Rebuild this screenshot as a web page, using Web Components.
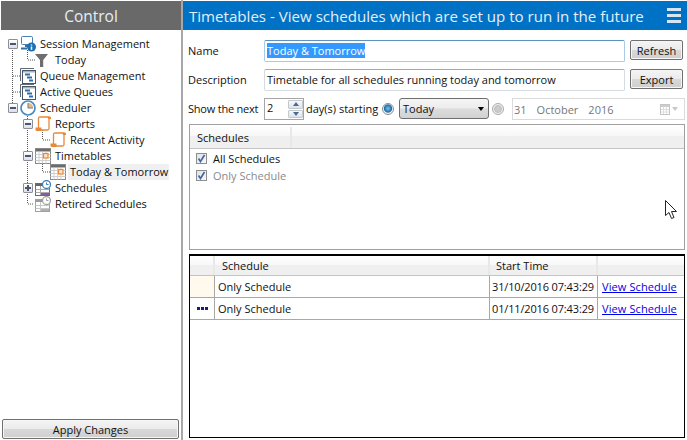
<!DOCTYPE html>
<html>
<head>
<meta charset="utf-8">
<title>Timetables</title>
<style>
  html, body { margin: 0; padding: 0; background: #fff; }
  body { font: 11px "Open Sans", "Noto Sans", sans-serif; color: #111; overflow: hidden; }
</style>
</head>
<body>
<control-app></control-app>

<script>
// icons used by the tree, all 16 wide
const ICONS = {
  session: `<svg width="16" height="16" viewBox="0 0 16 16">
    <rect x="1.500" y="0.500" width="11" height="8" rx="1" fill="#fff" stroke="#4a7fb5"/>
    <path d="M5 10h4M1 12.500h6" stroke="#2f6fa8" stroke-width="2" fill="none"/>
    <circle cx="11.500" cy="11" r="4.500" fill="#1f6fb0"/>
    <path d="M11.500 8.500v1M11.500 10.500v3.200" stroke="#fff" stroke-width="1.500"/></svg>`,
  filter: `<svg width="14" height="16" viewBox="0 0 14 16">
    <path d="M0 2h13L8.200 8v7H5V8z" fill="#6e6e6e"/></svg>`,
  queue: `<svg width="16" height="16" viewBox="0 0 16 16">
    <path d="M0.500 13V0.500H14" fill="none" stroke="#5d6b7a"/>
    <rect x="2.500" y="2.500" width="13" height="13" fill="#fff" stroke="#4b5563"/>
    <rect x="3" y="3" width="12" height="1.500" fill="#9fb3c8"/>
    <path d="M5 6.500h5M7 9.500h5M9 12.500h4" stroke="#2b6ea8" stroke-width="2"/></svg>`,
  clock: `<svg width="16" height="16" viewBox="0 0 16 16">
    <circle cx="8" cy="8" r="7" fill="#fff" stroke="#4a8ac4" stroke-width="1.700"/>
    <path d="M8 2.800V8h5.200A5.200 5.200 0 0 0 8 2.800z" fill="#e0bd85"/>
    <path d="M8 3v5h5" stroke="#777" fill="none"/></svg>`,
  report: `<svg width="16" height="16" viewBox="0 0 16 16">
    <path d="M3.500 12V2.500q0-1.500 1.500-1.500h8q1 0 1 1.500v10q0 1.500-1.500 1.500H6" fill="#fff" stroke="#e8893a" stroke-width="1.300"/>
    <path d="M0.500 11.500h6v3.500H2Q0.500 15 0.500 13.500z" fill="#e8893a"/>
    <path d="M12.500 0.500h2.500q1 0 1 1v1.500h-3z" fill="#e8893a"/></svg>`,
  timetable: `<svg width="16" height="16" viewBox="0 0 16 16">
    <rect x="0.500" y="0.500" width="15" height="15" fill="#fff" stroke="#888"/>
    <rect x="1" y="1" width="14" height="2.500" fill="#6c6c6c"/>
    <path d="M4 3.500v12M7.500 3.500v12M11 3.500v12M0.500 6.500h15M0.500 9.500h15M0.500 12.500h15" stroke="#cfcfcf"/>
    <rect x="8.500" y="5.500" width="4.500" height="4.500" fill="#fbe3c8" stroke="#e8893a" stroke-width="1.200"/></svg>`,
  schedules: `<svg width="16" height="16" viewBox="0 0 16 16">
    <rect x="0.500" y="3.500" width="14" height="12" fill="#fff" stroke="#6b6b6b"/>
    <rect x="1" y="4" width="13" height="2" fill="#666"/>
    <path d="M5.500 6v9M0.500 9.500h14M0.500 12.500h14" stroke="#aaa"/>
    <rect x="6" y="13" width="8" height="2" fill="#8a5aa8"/>
    <circle cx="11.500" cy="4.500" r="4" fill="#fff" stroke="#3f7fb8" stroke-width="1.300"/>
    <path d="M11.500 2.500v2h2" stroke="#3f7fb8" fill="none"/></svg>`,
  retired: `<svg width="16" height="16" viewBox="0 0 16 16">
    <rect x="0.500" y="3.500" width="14" height="12" fill="#fff" stroke="#a0a0a0"/>
    <rect x="1" y="4" width="13" height="2" fill="#9a9a9a"/>
    <path d="M5.500 6v9M0.500 9.500h14M0.500 12.500h14" stroke="#c8c8c8"/>
    <rect x="6" y="13" width="8" height="2" fill="#b0b0b0"/>
    <circle cx="11.500" cy="4.500" r="4" fill="#fff" stroke="#a5a5a5" stroke-width="1.300"/>
    <path d="M11.500 2.500v2h2" stroke="#a5a5a5" fill="none"/></svg>`
};

class PanelTitle extends HTMLElement {
  constructor() {
    super();
    this.attachShadow({ mode: "open" });
    this.shadowRoot.innerHTML = `
      <style>
        :host { display: flex; align-items: center; height: 29px; color: #e6eef6; flex: none; }
        :host([kind="gray"]) { background: #696969; justify-content: center; font-size: 15.500px; }
        :host([kind="blue"]) { background: #0072c6; justify-content: space-between; font-size: 15.100px; padding: 0 6px; }
        .menu { display: flex; flex-direction: column; gap: 3px; }
        .menu i { display: block; width: 14px; height: 3px; background: #d6e6f4; }
      </style>
      <slot></slot>
      ${this.getAttribute("kind") === "blue" ? '<div class="menu"><i></i><i></i><i></i></div>' : ""}
    `;
  }
}

class TreeItem extends HTMLElement {
  constructor() {
    super();
    this.attachShadow({ mode: "open" });
    const level = Number(this.getAttribute("level") || 0);
    const exp = this.getAttribute("exp");
    this.shadowRoot.innerHTML = `
      <style>
        :host { display: flex; align-items: center; height: 16px; white-space: nowrap; }
        .exp { width: 15px; flex: none; }
        .box { box-sizing: border-box; width: 10px; height: 10px; margin-left: 3px;
               border: 1px solid #8a8f98; border-radius: 1px; background: linear-gradient(#fff, #dcdfe4);
               position: relative; z-index: 1; }
        .box i { position: absolute; left: 1px; top: 3px; width: 6px; height: 2px; background: #4a5670; }
        .box b { position: absolute; left: 3px; top: 1px; width: 2px; height: 6px; background: #4a5670; }
        .icon { width: 16px; height: 16px; flex: none; margin-right: 4px; display: flex; position: relative; z-index: 1; }
        .text { padding: 0 1px 0 2px; margin-left: -2px; line-height: 16px; }
        :host([selected]) .text { background: #f0f0f0; }
      </style>
      <div class="exp">${exp ? `<div class="box"><i></i>${exp === "plus" ? "<b></b>" : ""}</div>` : ""}</div>
      <div class="icon">${ICONS[this.getAttribute("icon")] || ""}</div>
      <div class="text"><slot></slot></div>
    `;
    this.style.paddingLeft = (4 + level * 15) + "px";
  }
}

class TreeView extends HTMLElement {
  constructor() {
    super();
    this.attachShadow({ mode: "open" });
    this.shadowRoot.innerHTML = `
      <style>
        :host { display: block; position: relative; flex: 1; padding-top: 6px; }
        svg { position: absolute; left: 0; top: 0; }
        path { stroke: #555; stroke-dasharray: 1 1; fill: none; }
      </style>
      <svg width="180" height="190">
        <path d="M11.500 20V73M12 46h7M12 62h7"/>
        <path d="M26.500 20V30M27 30h7"/>
        <path d="M26.500 84V174M27 174h6"/>
        <path d="M41.500 100V110M42 110h7"/>
        <path d="M41.500 132V142M42 142h7"/>
      </svg>
      <slot></slot>
    `;
  }
}

class PushButton extends HTMLElement {
  constructor() {
    super();
    this.attachShadow({ mode: "open" });
    this.shadowRoot.innerHTML = `
      <style>
        :host { display: flex; align-items: center; justify-content: center; box-sizing: border-box; flex: none;
                width: 53px; height: 20px; border: 1px solid #707070; border-radius: 2px;
                background: linear-gradient(#f4f4f4 0%, #ebebeb 48%, #d8d8d8 52%, #cfcfcf 100%);
                box-shadow: inset 0 0 0 1px #f6f6f6; color: #111; }
      </style>
      <slot></slot>
    `;
  }
}

class TextField extends HTMLElement {
  constructor() {
    super();
    this.attachShadow({ mode: "open" });
    this.shadowRoot.innerHTML = `
      <style>
        :host { display: flex; align-items: center; box-sizing: border-box; flex: 1; height: 22px;
                padding: 0 2px 2px; border: 1px solid #d5dbe3; border-top-color: #a8a8a8; border-radius: 2px; min-width: 0; }
        :host([focused]) { border-color: #a9cbe3; border-top-color: #5b93bd; }
        ::slotted(mark) { background: #3399ff; color: #fff; }
      </style>
      <slot></slot>
    `;
  }
}

class SpinBox extends HTMLElement {
  constructor() {
    super();
    this.attachShadow({ mode: "open" });
    this.shadowRoot.innerHTML = `
      <style>
        :host { display: flex; box-sizing: border-box; width: 40px; height: 22px; flex: none;
                border: 1px solid #a5a5a5; padding-left: 2px; }
        .val { flex: 1; line-height: 17px; }
        .btns { display: flex; flex-direction: column; width: 15px; padding: 1px 0; gap: 1px; }
        .btns div { flex: 1; display: flex; align-items: center; justify-content: center;
                    border: 1px solid #c4c8cf; border-radius: 1px; background: linear-gradient(#f8f8f8, #dfe3e8); }
        .up { width: 0; height: 0; border: 3px solid transparent; border-top: 0; border-bottom: 4px solid #4a6a96; }
        .down { width: 0; height: 0; border: 3px solid transparent; border-bottom: 0; border-top: 4px solid #4a6a96; }
      </style>
      <div class="val"><slot></slot></div>
      <div class="btns"><div><span class="up"></span></div><div><span class="down"></span></div></div>
    `;
  }
}

class ComboBox extends HTMLElement {
  constructor() {
    super();
    this.attachShadow({ mode: "open" });
    this.shadowRoot.innerHTML = `
      <style>
        :host { display: flex; align-items: center; justify-content: space-between; box-sizing: border-box; flex: none;
                width: 90px; height: 21px; padding: 0 4px 0 3px; border: 1px solid #6e6e6e; border-radius: 3px;
                background: linear-gradient(#f5f5f5 0%, #ececec 48%, #dcdcdc 52%, #d2d2d2 100%); align-self: flex-start; font-weight: 500; }
        .arrow { width: 0; height: 0; border: 3.500px solid transparent; border-bottom: 0; border-top: 4px solid #000; }
      </style>
      <span><slot></slot></span><span class="arrow"></span>
    `;
  }
}

class RadioDot extends HTMLElement {
  constructor() {
    super();
    this.attachShadow({ mode: "open" });
    this.shadowRoot.innerHTML = `
      <style>
        :host { display: block; box-sizing: border-box; width: 12px; height: 12px; flex: none; border-radius: 50%;
                border: 1px solid #8d8d8d; background: #eee; }
        :host([on]) { background: radial-gradient(circle at 50% 45%, #7fc0ee 0, #1c6ea8 50%, #eef2f5 62%); }
        :host(:not([on])) { background: radial-gradient(circle, #cfcfcf 0, #c4c4c4 50%, #f0f0f0 62%); border-color: #aaa; }
      </style>
    `;
  }
}

class DatePicker extends HTMLElement {
  constructor() {
    super();
    this.attachShadow({ mode: "open" });
    this.shadowRoot.innerHTML = `
      <style>
        :host { display: flex; align-items: center; box-sizing: border-box; flex: none; width: 173px; height: 22px;
                border: 1px solid #dadada; padding: 0 6px 0 1px; color: #777; }
        .txt { flex: 1; display: flex; gap: 10px; }
        .pick { display: flex; align-items: center; gap: 2px; }
        .arrow { width: 0; height: 0; border: 3.500px solid transparent; border-bottom: 0; border-top: 4px solid #c8c8c8; }
      </style>
      <div class="txt"><slot></slot></div>
      <div class="pick">
        <svg width="10" height="11" viewBox="0 0 10 11">
          <rect x="0.500" y="0.500" width="9" height="10" fill="#fff" stroke="#c4c4c4"/>
          <rect x="1" y="1" width="8" height="2" fill="#cfcfcf"/>
          <path d="M3.500 3v7M6.500 3v7M1 5.500h8M1 8h8" stroke="#dedede"/>
        </svg>
        <span class="arrow"></span>
      </div>
    `;
  }
}

class CheckItem extends HTMLElement {
  constructor() {
    super();
    this.attachShadow({ mode: "open" });
    this.shadowRoot.innerHTML = `
      <style>
        :host { display: flex; align-items: center; height: 17px; gap: 6px; }
        :host([disabled]) { color: #8a8a8a; }
        .box { box-sizing: border-box; width: 11px; height: 11px; border: 1px solid #8e8e8e; flex: none;
               background: linear-gradient(135deg, #dfe3e8, #f8f8f8); display: flex; }
      </style>
      <div class="box">
        <svg width="9" height="9" viewBox="0 0 9 9"><path d="M1.500 4.500L3.500 7.500L7.500 1" fill="none" stroke="#4668a0" stroke-width="1.700"/></svg>
      </div>
      <slot></slot>
    `;
  }
}

// header strip shared by the two lists, cells come in through the slot
class ListHeader extends HTMLElement {
  constructor() {
    super();
    this.attachShadow({ mode: "open" });
    this.shadowRoot.innerHTML = `
      <style>
        :host { display: grid; box-sizing: border-box; flex: none; border-bottom: 1px solid #c4c4c4;
                background: linear-gradient(#fff 0%, #f8f8f8 45%, #efefef 50%, #f0f0f0 100%); }
        ::slotted(*) { display: flex; align-items: center; border-right: 2px solid #e8e8e8; padding-left: 7px; }
      </style>
      <slot></slot>
    `;
  }
}

class ScheduleRow extends HTMLElement {
  constructor() {
    super();
    this.attachShadow({ mode: "open" });
    const state = this.getAttribute("state");
    this.shadowRoot.innerHTML = `
      <style>
        :host { display: grid; grid-template-columns: var(--grid-cols); height: 22px; box-sizing: border-box;
                border-bottom: 1px solid #a8a8a8; flex: none; }
        .cell { display: flex; align-items: center; border-right: 1px solid #a8a8a8; padding-left: 3px; white-space: nowrap; }
        .state { padding: 0; justify-content: center; }
        .state.wait { background: #fff9ee; }
        .time { padding-left: 2px; letter-spacing: -0.150px; }
        .last { border-right: 0; padding-left: 4px; letter-spacing: 0.100px; }
        .dots { display: flex; gap: 1px; }
        .dots i { width: 3px; height: 3px; background: #1c1c78; }
        a { color: #0000e6; text-decoration: underline; }
      </style>
      <div class="cell state ${state === "wait" ? "wait" : ""}">
        ${state === "running" ? '<div class="dots"><i></i><i></i><i></i></div>' : ""}
      </div>
      <div class="cell">${this.getAttribute("name")}</div>
      <div class="cell time">${this.getAttribute("start")}</div>
      <div class="cell last"><a href="#">View Schedule</a></div>
    `;
  }
}

class ControlApp extends HTMLElement {
  constructor() {
    super();
    this.attachShadow({ mode: "open" });
    this.shadowRoot.innerHTML = `
      <style>
        :host { display: flex; position: relative; width: 687px; height: 440px; box-sizing: border-box; padding-top: 1px; }
        .side { display: flex; flex-direction: column; width: 180px; margin-left: 1px; flex: none; }
        .foot { padding: 0 0 1px 1px; }
        .foot push-button { width: 177px; height: 20px; }
        .split { width: 2px; background: #a8a8a8; flex: none; margin-top: -1px; }
        .main { flex: 1; display: flex; flex-direction: column; min-width: 0; }
        .row { display: flex; align-items: center; padding-left: 5px; flex: none; }
        .lab { width: 76px; flex: none; white-space: nowrap; padding-bottom: 1px; }
        .r1 { margin-top: 10px; height: 22px; padding-right: 4px; }
        .r2 { margin-top: 7px; height: 22px; padding-right: 4px; }
        .r1 push-button, .r2 push-button { margin-left: 5px; align-self: flex-start; }
        .r3 { margin-top: 7px; height: 22px; }
        .r3 .lab { letter-spacing: -0.220px; }
        .days { width: 78px; padding: 0 0 1px 2px; flex: none; box-sizing: border-box; white-space: nowrap; }
        .box1 { margin: 4px 2px 0 6px; height: 126px; box-sizing: border-box; border: 1px solid #a0a0a0; flex: none;
                display: flex; flex-direction: column; }
        .box1 list-header { grid-template-columns: 102px 1fr; height: 24px; padding-top: 2px; }
        .box1 list-header span:last-child { border-right: 0; }
        .checks { padding: 1px 0 0 6px; }
        .box2 { --grid-cols: 25px 275px 108px 1fr; margin: 4px 2px 2px 6px; flex: 1; box-sizing: border-box;
                border: 1px solid #000; border-top-width: 2px; display: flex; flex-direction: column; }
        .box2 list-header { grid-template-columns: var(--grid-cols); height: 20px; }
        .box2 list-header span:last-child { border-right: 0; }
        .pointer { position: absolute; left: 665px; top: 200px; }
      </style>
      <div class="side">
        <panel-title kind="gray">Control</panel-title>
        <tree-view>
          <tree-item level="0" icon="session" exp="minus">Session Management</tree-item>
          <tree-item level="1" icon="filter">Today</tree-item>
          <tree-item level="0" icon="queue">Queue Management</tree-item>
          <tree-item level="0" icon="queue">Active Queues</tree-item>
          <tree-item level="0" icon="clock" exp="minus">Scheduler</tree-item>
          <tree-item level="1" icon="report" exp="minus">Reports</tree-item>
          <tree-item level="2" icon="report">Recent Activity</tree-item>
          <tree-item level="1" icon="timetable" exp="minus">Timetables</tree-item>
          <tree-item level="2" icon="timetable" selected>Today &amp; Tomorrow</tree-item>
          <tree-item level="1" icon="schedules" exp="plus">Schedules</tree-item>
          <tree-item level="1" icon="retired">Retired Schedules</tree-item>
        </tree-view>
        <div class="foot"><push-button>Apply Changes</push-button></div>
      </div>
      <div class="split"></div>
      <div class="main">
        <panel-title kind="blue">Timetables - View schedules which are set up to run in the future</panel-title>
        <div class="row r1">
          <div class="lab">Name</div>
          <text-field focused><mark>Today &amp; Tomorrow</mark></text-field>
          <push-button>Refresh</push-button>
        </div>
        <div class="row r2">
          <div class="lab">Description</div>
          <text-field>Timetable for all schedules running today and tomorrow</text-field>
          <push-button>Export</push-button>
        </div>
        <div class="row r3">
          <div class="lab">Show the next</div>
          <spin-box>2</spin-box>
          <div class="days">day(s) starting</div>
          <radio-dot on></radio-dot>
          <combo-box style="margin-left:5px">Today</combo-box>
          <radio-dot style="margin-left:3px"></radio-dot>
          <date-picker style="margin-left:8px"><span>31</span><span>October</span><span>2016</span></date-picker>
        </div>
        <div class="box1">
          <list-header><span>Schedules</span><span></span></list-header>
          <div class="checks">
            <check-item>All Schedules</check-item>
            <check-item disabled>Only Schedule</check-item>
          </div>
        </div>
        <div class="box2">
          <list-header><span></span><span>Schedule</span><span style="padding-left:6px">Start Time</span><span></span></list-header>
          <schedule-row state="wait" name="Only Schedule" start="31/10/2016 07:43:29"></schedule-row>
          <schedule-row state="running" name="Only Schedule" start="01/11/2016 07:43:29"></schedule-row>
        </div>
      </div>
      <svg class="pointer" width="13" height="20" viewBox="0 0 13 20">
        <path d="M0.500 0.500V15.500L4 12.500L6.500 18.500L9 17.500L6.500 11.500H11.500Z" fill="#fff" stroke="#222"/>
      </svg>
    `;
  }
}

customElements.define("panel-title", PanelTitle);
customElements.define("tree-item", TreeItem);
customElements.define("tree-view", TreeView);
customElements.define("push-button", PushButton);
customElements.define("text-field", TextField);
customElements.define("spin-box", SpinBox);
customElements.define("combo-box", ComboBox);
customElements.define("radio-dot", RadioDot);
customElements.define("date-picker", DatePicker);
customElements.define("check-item", CheckItem);
customElements.define("list-header", ListHeader);
customElements.define("schedule-row", ScheduleRow);
customElements.define("control-app", ControlApp);
</script>
</body>
</html>
